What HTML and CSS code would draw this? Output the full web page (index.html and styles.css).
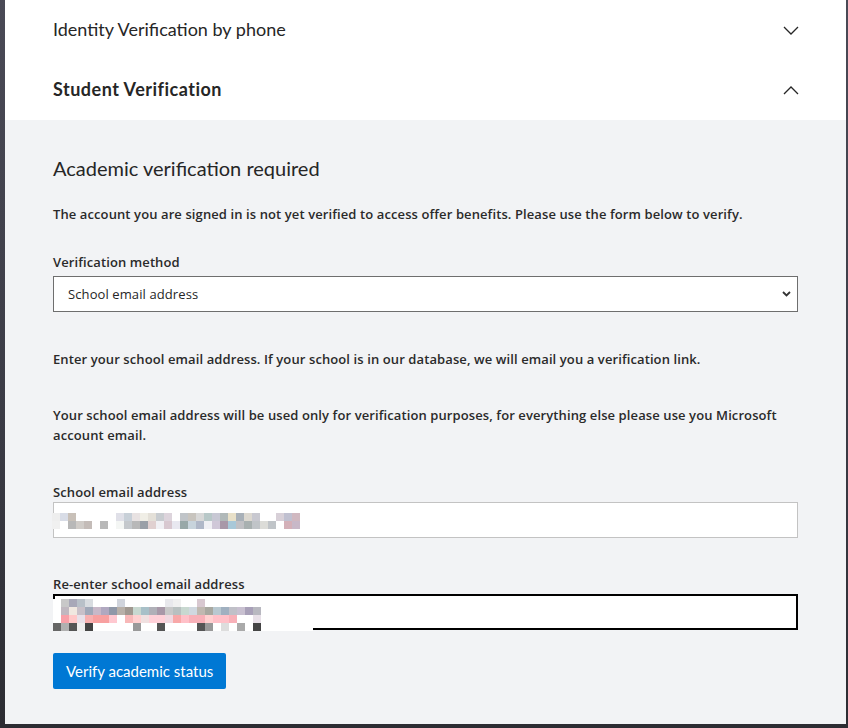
FILE: index.html
```html
<!DOCTYPE html>
<html lang="en">
<head>
<meta charset="utf-8">
<title>Student Verification</title>
<link rel="stylesheet" href="styles.css">
</head>
<body>
<div class="frame">
  <div class="panel">
    <div class="acc-row">
      <span class="acc-title">Identity Verification by phone</span>
      <svg class="chev" width="16" height="9" viewBox="0 0 16 9"><path d="M1 1 L8 8 L15 1" fill="none" stroke="#262626" stroke-width="1.3"/></svg>
    </div>
    <div class="acc-row">
      <span class="acc-title bold">Student Verification</span>
      <svg class="chev" width="16" height="9" viewBox="0 0 16 9"><path d="M1 8 L8 1 L15 8" fill="none" stroke="#262626" stroke-width="1.3"/></svg>
    </div>
    <div class="body">
      <h2 class="heading">Academic verification required</h2>
      <p class="text first">The account you are signed in is not yet verified to access offer benefits. Please use the form below to verify.</p>
      <label class="label">Verification method</label>
      <div class="select">
        <span>School email address</span>
        <svg width="9" height="6" viewBox="0 0 9 6"><path d="M1 1 L4.5 4.5 L8 1" fill="none" stroke="#333" stroke-width="1.8"/></svg>
      </div>
      <p class="text gap1">Enter your school email address. If your school is in our database, we will email you a verification link.</p>
      <p class="text gap2">Your school email address will be used only for verification purposes, for everything else please use you Microsoft account email.</p>
      <label class="label gap3">School email address</label>
      <div class="input">
        <div class="mosaic m1"></div>
      </div>
      <label class="label gap4">Re-enter school email address</label>
      <div class="input focused">
        <div class="mosaic m2"></div>
      </div>
      <button class="btn">Verify academic status</button>
    </div>
  </div>
</div>
</body>
</html>
```
FILE: styles.css
```css
html, body {
  margin: 0;
  padding: 0;
}
body {
  background: #2e2e34;
  font-family: "Lato", "Noto Sans", sans-serif;
  color: #262626;
}
.frame {
  width: 848px;
  height: 728px;
  background: linear-gradient(180deg, #4a4a56 0%, #3a3a44 60%, #2c2c32 100%);
  padding: 0 2px 4px 5px;
  box-sizing: border-box;
}
.panel {
  background: #f2f3f5;
  height: 100%;
  overflow: hidden;
}
.acc-row {
  background: #fff;
  height: 60px;
  display: flex;
  align-items: center;
  justify-content: space-between;
  padding: 0 47px 0 48px;
}
.acc-title {
  font-size: 18px;
  font-weight: 400;
  margin-top: -2px;
}
.acc-title.bold {
  font-weight: 700;
  letter-spacing: 0.5px;
}
.chev {
  display: block;
}
.body {
  padding: 34px 48px 0 48px;
}
.heading {
  margin: 0;
  font-size: 20px;
  font-weight: 400;
  line-height: 28px;
}
.text {
  margin: 0;
  font-family: "Open Sans", "Noto Sans", sans-serif;
  font-size: 13px;
  line-height: 20px;
  font-weight: 600;
  letter-spacing: 0.1px;
  color: #2a2a2a;
}
.text.first {
  margin-top: 22px;
}
.label {
  display: block;
  font-family: "Open Sans", "Noto Sans", sans-serif;
  font-size: 13px;
  line-height: 20px;
  font-weight: 600;
  letter-spacing: 0.1px;
  color: #2a2a2a;
  margin-top: 28px;
  margin-bottom: 4px;
}
.select {
  height: 36px;
  box-sizing: border-box;
  border: 1px solid #6e6e6e;
  background: #fff;
  display: flex;
  align-items: center;
  justify-content: space-between;
  padding: 0 6px 0 14px;
  font-family: "Open Sans", "Noto Sans", sans-serif;
  font-size: 13px;
  letter-spacing: 0.1px;
}
.select svg {
  display: block;
}
.gap1 {
  margin-top: 37px;
}
.gap2 {
  margin-top: 36px;
}
.gap3 {
  margin-top: 37px;
  margin-bottom: 0;
}
.gap4 {
  margin-top: 36px;
  margin-bottom: 0;
}
.input {
  position: relative;
  height: 36px;
  box-sizing: border-box;
  border: 1px solid #c3c3c3;
  background: #fff;
}
.input.focused {
  border: 2px solid #000;
}
.mosaic {
  position: absolute;
  top: 0;
  left: -2px;
}
.m1 {
  top: 10px;
  width: 252px;
  height: 16px;
  background:
    linear-gradient(90deg, #eee 0 8px, #d8dce6 8px 16px, #c8c0b8 16px 24px, #fff 24px 64px, #e0e0e8 64px 72px, #c8d0d8 72px 80px, #e8e2e2 80px 88px, #f0eee6 88px 96px, #e4e0d8 96px 104px, #c8ccd0 104px 112px, #ddd4dc 112px 120px, #fff 120px 128px, #c0c4c8 128px 136px, #c8c4be 136px 144px, #d8d8d8 144px 152px, #b8c8c8 152px 160px, #c8c8d4 160px 168px, #b0b8b8 168px 176px, #e8e0c8 176px 184px, #a8b0b8 184px 192px, #dcd8d0 192px 200px, #c8c8d0 200px 208px, #fff 208px 224px, #d8d0d8 224px 232px, #c0c0d0 232px 240px, #d0b8c0 240px 248px, #fff 248px) 0 0 / 252px 8px no-repeat,
    linear-gradient(90deg, #f0f0f0 0 8px, #fff 8px 16px, #b8b8b8 16px 24px, #d0ccc8 24px 32px, #c4bcb8 32px 40px, #fff 40px 48px, #b8b8b8 48px 56px, #fff 56px 64px, #f4f6f4 64px 72px, #c4c8cc 72px 80px, #b8b8b8 80px 88px, #9aa0a8 88px 96px, #e0d0d0 96px 104px, #f0f0f4 104px 112px, #d8c8d0 112px 120px, #e8e8f0 120px 128px, #98a8a8 128px 136px, #c8d4dc 136px 144px, #b0b8c8 144px 152px, #f0f0f4 152px 160px, #d0c8d8 160px 168px, #a898a8 168px 176px, #a8c8d8 176px 184px, #c0c0c4 184px 192px, #a8b0b0 192px 200px, #c0c4c8 200px 208px, #dcdcd8 208px 216px, #c0c4c8 216px 224px, #fff 224px 232px, #d4b0b8 232px 240px, #c8b8c8 240px 248px, #fff 248px) 0 8px / 252px 8px no-repeat;
}
.m2 {
  top: 3px;
  width: 260px;
  height: 32px;
  background:
    linear-gradient(90deg, #fff 0 8px, #c8c8c8 8px 16px, #a8a8b8 16px 24px, #b8c0c8 24px 32px, #d8dce0 32px 40px, #fff 40px 64px, #d0d4dc 64px 72px, #fff 72px 112px, #e8e8ec 112px 120px, #f0f0f0 120px 128px, #fff 128px 144px, #d8c8d0 144px 152px, #fff 152px) 0 0 / 260px 8px no-repeat,
    linear-gradient(90deg, #fff 0 8px, #c0b8c0 8px 16px, #f0e8e0 16px 24px, #c8c0c8 24px 32px, #a0a8b8 32px 40px, #c8b8c8 40px 48px, #b0a8c0 48px 56px, #9098a8 56px 64px, #b8b0a8 64px 72px, #a09890 72px 80px, #c8d8d0 80px 88px, #a8c0c8 88px 96px, #b0b0b8 96px 104px, #a898a8 104px 112px, #c8c8c8 112px 120px, #b8c0c0 120px 128px, #c8d8d0 128px 136px, #d0d8e0 136px 144px, #c0b8b0 144px 152px, #a8a8a0 152px 160px, #b8c8d0 160px 168px, #a0b0c0 168px 176px, #c0c0c8 176px 184px, #c8c0d0 184px 192px, #a8a0b8 192px 200px, #b8b8c0 200px 208px, #fff 208px) 0 8px / 260px 8px no-repeat,
    linear-gradient(90deg, #fff 0 8px, #f8a0a8 8px 16px, #ffc8c8 16px 24px, #e8e0e8 24px 32px, #f8b0b0 32px 40px, #f8a0a0 40px 56px, #ffc8d0 56px 64px, #fff 64px 72px, #f8b8b8 72px 80px, #ffd0d0 80px 88px, #f0e0e0 88px 96px, #ffd0d8 96px 112px, #f0d8e0 112px 120px, #f8a8a8 120px 128px, #ffc0c8 128px 136px, #f8b0b8 136px 152px, #ffd0d0 152px 160px, #ffc0c8 160px 176px, #f8b0b8 176px 184px, #fff 184px 200px, #e8e0e8 200px 208px, #fff 208px) 0 16px / 260px 8px no-repeat,
    linear-gradient(90deg, #666 0 8px, #b0b0b0 8px 16px, #555 16px 24px, #eee 24px 32px, #444 32px 40px, #fff 40px 80px, #999 80px 88px, #fff 88px 104px, #555 104px 112px, #fff 112px 144px, #555 144px 152px, #999 152px 160px, #fff 160px 168px, #ddd 168px 176px, #fff 176px 184px, #aaa 184px 192px, #fff 192px 200px, #444 200px 208px, #fff 208px) 0 24px / 260px 8px no-repeat;
}
.btn {
  margin-top: 23px;
  display: block;
  height: 36px;
  padding: 0 13px;
  border: none;
  border-radius: 2px;
  background: #0078d4;
  color: #fff;
  font-family: inherit;
  font-size: 15px;
}
```
